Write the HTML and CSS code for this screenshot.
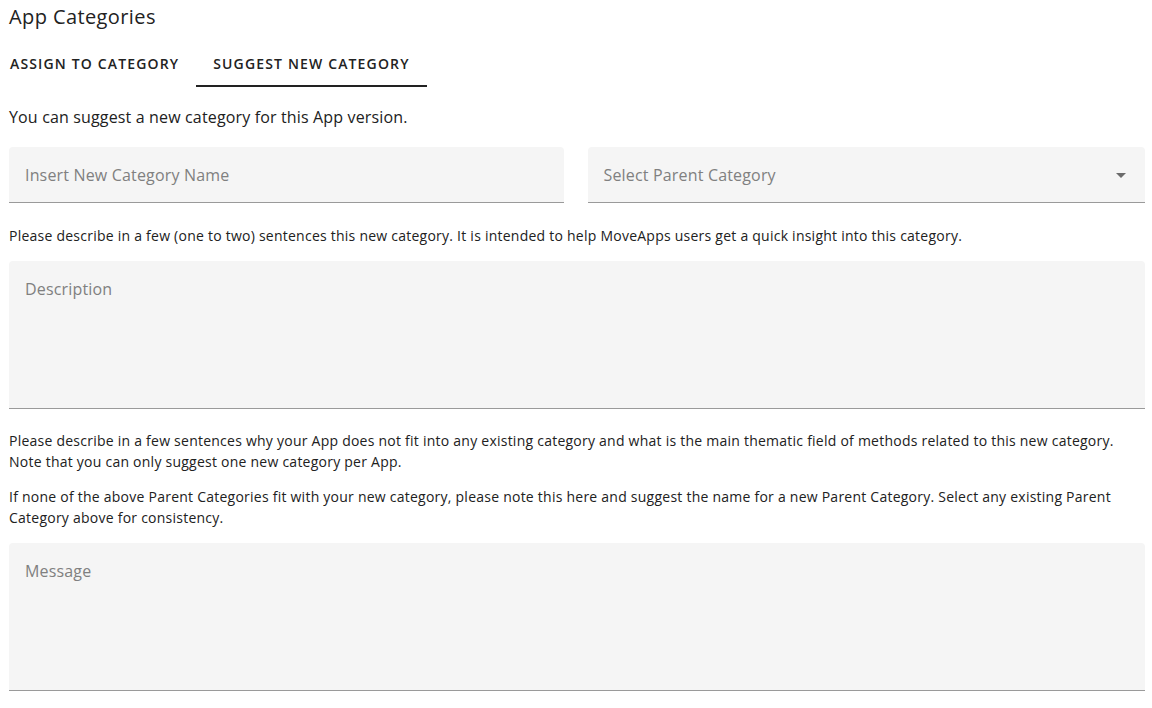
FILE: index.html
```html
<!DOCTYPE html>
<html lang="en">
<head>
<meta charset="utf-8">
<title>App Categories</title>
<link rel="stylesheet" href="styles.css">
</head>
<body>
<main class="page">
  <h1 class="title">App Categories</h1>
  <nav class="tabs">
    <div class="tab">Assign to Category</div>
    <div class="tab tab-active">Suggest New Category</div>
  </nav>
  <p class="intro">You can suggest a new category for this App version.</p>
  <div class="fields">
    <div class="field"><span class="placeholder">Insert New Category Name</span></div>
    <div class="field field-select">
      <span class="placeholder">Select Parent Category</span>
      <svg class="arrow" width="10" height="5" viewBox="0 0 10 5"><path d="M0 0 L10 0 L5 5 Z" fill="#6b6b6b"/></svg>
    </div>
  </div>
  <p class="help help-first">Please describe in a few (one to two) sentences this new category. It is intended to help MoveApps users get a quick insight into this category.</p>
  <div class="area"><span class="placeholder">Description</span></div>
  <p class="help help-gap">Please describe in a few sentences why your App does not fit into any existing category and what is the main thematic field of methods related to this new category. Note that you can only suggest one new category per App.</p>
  <p class="help help-next">If none of the above Parent Categories fit with your new category, please note this here and suggest the name for a new Parent Category. Select any existing Parent Category above for consistency.</p>
  <div class="area"><span class="placeholder">Message</span></div>
</main>
</body>
</html>
```
FILE: styles.css
```css
* { box-sizing: border-box; }
html, body { margin: 0; padding: 0; background: #fff; }
body {
  font-family: "Open Sans", "Noto Sans", sans-serif;
  color: #212121;
}
.page {
  width: 1136px;
  margin-left: 9px;
}
.title {
  margin: 0;
  font-size: 20px;
  font-weight: 400;
  line-height: 34px;
  letter-spacing: 0.4px;
  color: #222;
}
.tabs {
  display: flex;
  margin-top: 5px;
  margin-left: -16px;
  height: 48px;
}
.tab {
  display: flex;
  align-items: center;
  padding: 2px 17px 0;
  font-size: 14px;
  font-weight: 600;
  letter-spacing: 1.15px;
  text-transform: uppercase;
  color: #222;
  border-bottom: 2px solid transparent;
}
.tab-active { border-bottom-color: #222; }
.intro {
  margin: 18px 0 0;
  font-size: 16px;
  line-height: 24px;
  letter-spacing: 0.15px;
}
.fields {
  display: flex;
  gap: 24px;
  margin-top: 18px;
}
.field {
  flex: 1 1 0;
  height: 56px;
  background: #f5f5f5;
  border-bottom: 1px solid #9a9a9a;
  border-radius: 4px 4px 0 0;
  display: flex;
  align-items: center;
  padding: 1px 16px 0;
}
.field-select { justify-content: space-between; padding-right: 19px; }
.arrow { display: block; }
.placeholder {
  font-size: 16px;
  line-height: 24px;
  letter-spacing: 0.17px;
  color: #808080;
}
.help {
  margin: 0;
  font-size: 14px;
  line-height: 21px;
  letter-spacing: 0.24px;
}
.help-first { margin-top: 22px; margin-bottom: 15px; }
.help-gap { margin-top: 21px; }
.help-next { margin-top: 14px; margin-bottom: 15px; }
.area {
  height: 148px;
  background: #f5f5f5;
  border-bottom: 1px solid #9a9a9a;
  border-radius: 4px 4px 0 0;
  padding: 16px 16px 0;
}
.area .placeholder { display: block; }
```
